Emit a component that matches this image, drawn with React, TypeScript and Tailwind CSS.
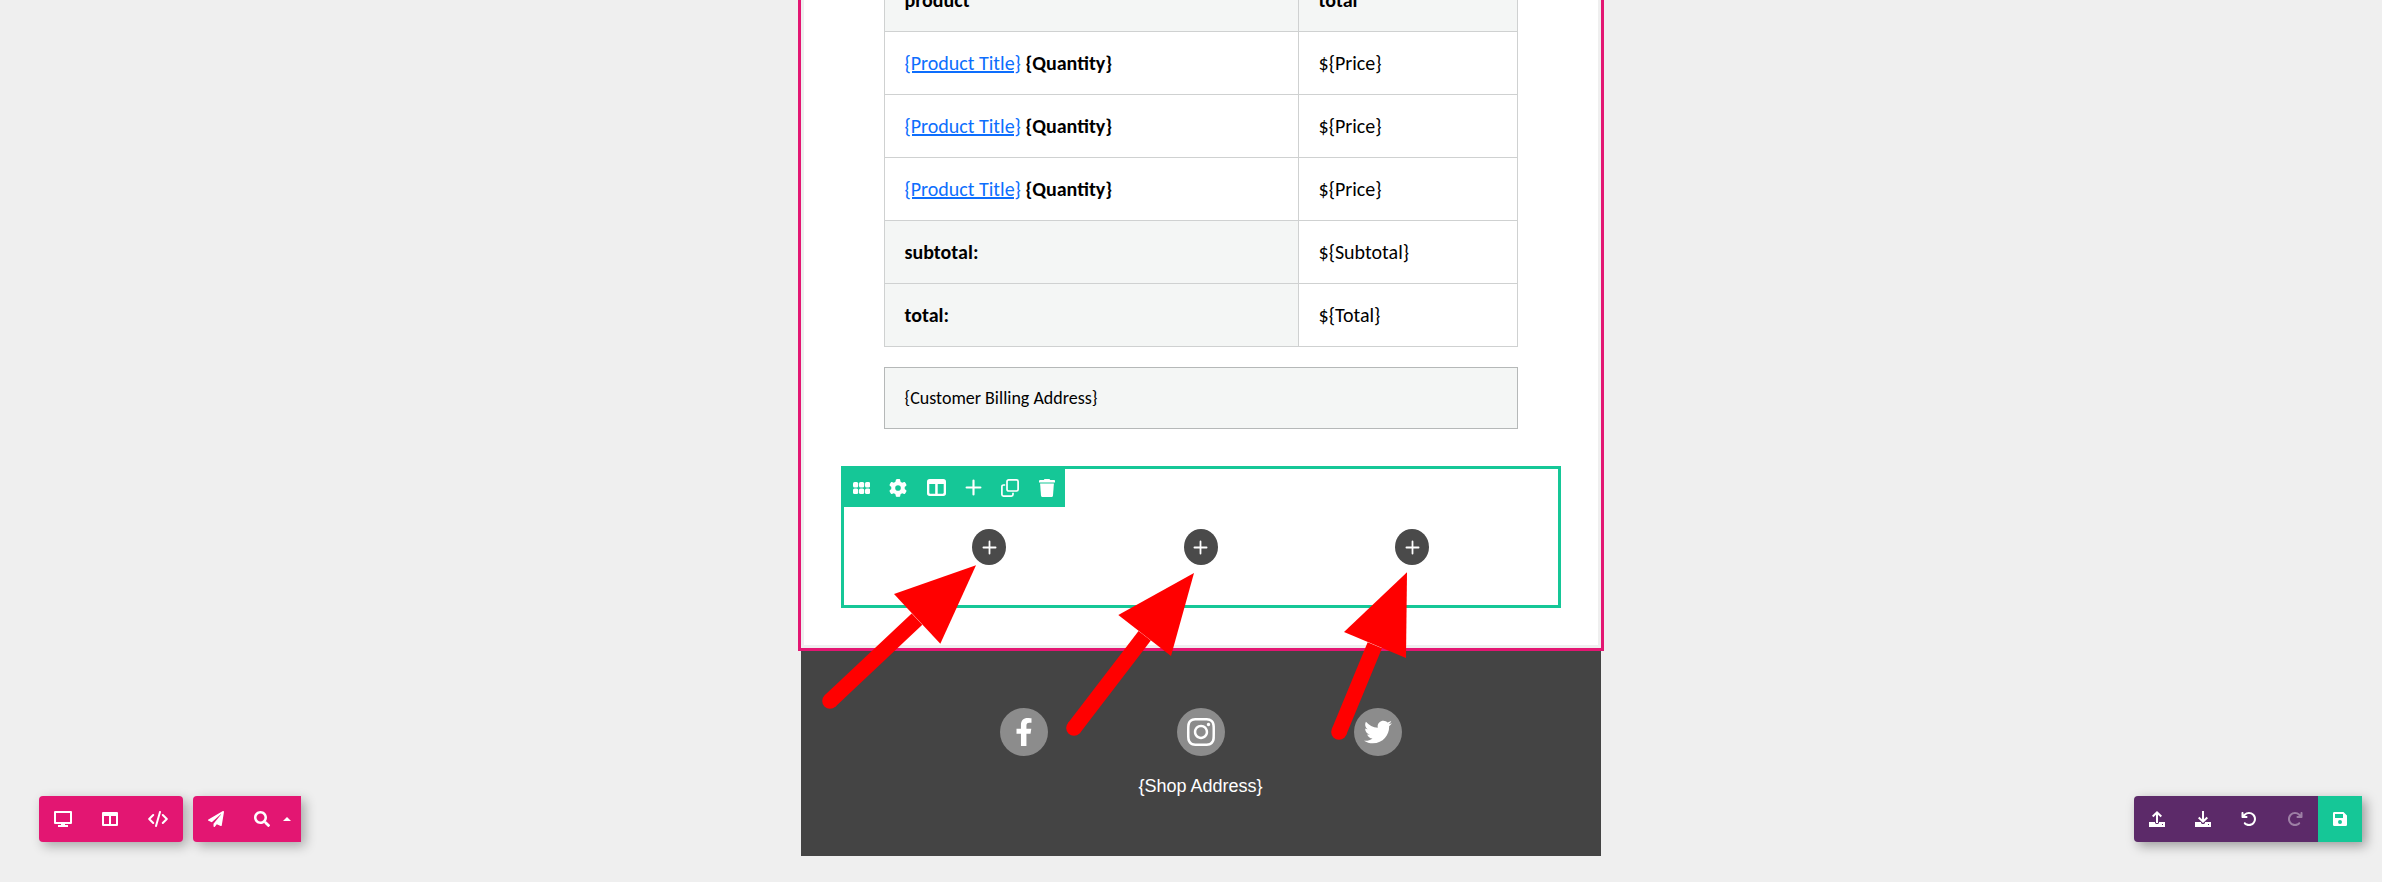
import type { ReactNode } from 'react';
import { FaPaperPlane, FaSearch, FaFacebookF, FaTwitter } from 'react-icons/fa';
import { FaArrowRotateLeft, FaArrowRotateRight, FaGear, FaInstagram } from 'react-icons/fa6';

function GripIcon() {
  return (
    <svg width="17" height="12" viewBox="0 0 17 12" fill="currentColor">
      {[0, 6, 12].map((x) =>
        [0, 6.5].map((y) => <rect key={`${x}-${y}`} x={x} y={y} width="5.2" height="5.5" rx="1.6" />),
      )}
    </svg>
  );
}

function ColumnsRoundIcon() {
  return (
    <svg width="19" height="17" viewBox="0 0 19 17" fill="currentColor">
      <path
        fillRule="evenodd"
        d="M2.7 0h13.6A2.7 2.7 0 0 1 19 2.7v11.6A2.7 2.7 0 0 1 16.3 17H2.7A2.7 2.7 0 0 1 0 14.3V2.7A2.7 2.7 0 0 1 2.7 0ZM2.3 5v8.8c0 .5.4.9.9.9h5V5ZM10.7 5v9.700h5.1c.5 0 .9-.4.9-.9V5Z"
      />
    </svg>
  );
}

function PlusIcon({ size, stroke }: { size: number; stroke: number }) {
  return (
    <svg width={size} height={size} viewBox="0 0 16 16" fill="none" stroke="currentColor" strokeWidth={stroke} strokeLinecap="round">
      <path d="M8 1.5v13M1.5 8h13" />
    </svg>
  );
}

function CloneIcon() {
  return (
    <svg width="18" height="18" viewBox="0 0 18 18" fill="none" stroke="currentColor" strokeWidth="1.7">
      <rect x="6" y="0.9" width="11.1" height="11.1" rx="1.6" />
      <path d="M4.2 6H2.5A1.6 1.6 0 0 0 .9 7.6v7.9a1.6 1.6 0 0 0 1.6 1.6h7.9a1.6 1.6 0 0 0 1.6-1.6v-1.7" />
    </svg>
  );
}

function TrashIcon() {
  return (
    <svg width="16" height="18" viewBox="0 0 16 18" fill="currentColor">
      <path d="M5.5 0h5l.7 1H15c.6 0 1 .4 1 .9V3.600H0V1.9C0 1.400.4 1 1 1h3.800Z" />
      <path d="M1.1 4.500h13.800l-.9 11.900c-.1.900-.8 1.600-1.700 1.600H3.700c-.9 0-1.600-.7-1.700-1.600Z" />
    </svg>
  );
}

function DesktopIcon() {
  return (
    <svg width="18" height="16" viewBox="0 0 18 16" fill="currentColor">
      <path fillRule="evenodd" d="M1 0h16a1 1 0 0 1 1 1v11a1 1 0 0 1-1 1h-6v1h3v2H4v-2h3v-1H1a1 1 0 0 1-1-1V1a1 1 0 0 1 1-1Zm1 2v9h14V2Z" />
    </svg>
  );
}

function ColumnsIcon() {
  return (
    <svg width="16" height="14" viewBox="0 0 16 14" fill="currentColor">
      <path fillRule="evenodd" d="M1 0h14a1 1 0 0 1 1 1v12a1 1 0 0 1-1 1H1a1 1 0 0 1-1-1V1a1 1 0 0 1 1-1Zm1 4v8h5V4Zm7 0v8h5V4Z" />
    </svg>
  );
}

function CodeIcon() {
  return (
    <svg width="20" height="16" viewBox="0 0 20 16" fill="none" stroke="currentColor" strokeWidth="2" strokeLinecap="round" strokeLinejoin="round">
      <path d="M5.200 4 1.200 8l4 4M14.800 4l4 4-4 4M12 1 8 15" />
    </svg>
  );
}

function TrayIcon({ down }: { down?: boolean }) {
  return (
    <svg width="16" height="16" viewBox="0 0 16 16" fill="currentColor">
      <path fillRule="evenodd" d="M0 11h6v1l1 1h2l1-1v-1h6v5H0Zm13 2v1h1v-1Z" />
      {down ? (
        <path d="M7 0h2v8.300l2.600-2.500 1.400 1.400-5 4.800-5-4.800 1.400-1.400L7 8.300Z" />
      ) : (
        <path d="M7 12V3.700L4.400 6.200 3 4.800 8 0l5 4.800-1.400 1.400L9 3.700V12Z" />
      )}
    </svg>
  );
}

function SaveIcon() {
  return (
    <svg width="14" height="14" viewBox="0 0 14 14" fill="currentColor">
      <path fillRule="evenodd" d="M1.300 0h9.200L14 3.500v9.200a1.300 1.300 0 0 1-1.300 1.300H1.300A1.300 1.300 0 0 1 0 12.700V1.300A1.300 1.300 0 0 1 1.300 0ZM2 2v4h8V2Zm5 6a2 2 0 1 0 0 4 2 2 0 0 0 0-4Z" />
    </svg>
  );
}

const rows: { label: ReactNode; value: string; head?: boolean; shaded?: boolean }[] = [
  { label: <b>product</b>, value: 'total', head: true, shaded: true },
  ...[0, 1, 2].map(() => ({
    label: (
      <span>
        <a className="text-[#0d6efd] underline">{'{Product Title}'}</a> <b>{'{Quantity}'}</b>
      </span>
    ),
    value: '${Price}',
  })),
  { label: <b>subtotal:</b>, value: '${Subtotal}', shaded: true },
  { label: <b>total:</b>, value: '${Total}', shaded: true },
];

function OrderTable() {
  return (
    <div className="ml-20 -mt-8 w-[634px] border-x border-t border-[#cfd1d1] text-[20px] leading-[30px] text-black">
      {rows.map((r, i) => (
        <div key={i} className="flex h-[63px] border-b border-[#cfd1d1]">
          <div className={`flex w-[414px] items-center border-r border-[#cfd1d1] pl-[19.5px] ${r.shaded ? 'bg-[#f4f6f5]' : ''}`}>
            {r.label}
          </div>
          <div className={`flex flex-1 items-center pl-[19.5px] ${r.head ? 'bg-[#f4f6f5] font-bold' : ''}`}>{r.value}</div>
        </div>
      ))}
    </div>
  );
}

function Slot({ width, children }: { width: string; children: ReactNode }) {
  return <span className={`flex h-full items-center justify-center ${width}`}>{children}</span>;
}

function ColumnsBlock() {
  return (
    <div className="mt-[37px] ml-[37px] h-[142px] w-[720px] border-[3px] border-[#15c797]">
      <div className="flex h-[38px] w-[221px] bg-[#15c797] pb-[1px] text-white">
        <Slot width="w-[35px]"><GripIcon /></Slot>
        <Slot width="w-[38px]"><FaGear size={18} /></Slot>
        <Slot width="w-[38px]"><ColumnsRoundIcon /></Slot>
        <Slot width="w-[36px]"><PlusIcon size={17} stroke={2} /></Slot>
        <Slot width="w-[38px]"><CloneIcon /></Slot>
        <Slot width="w-[36px]"><TrashIcon /></Slot>
      </div>
      <div className="mt-[22px] flex gap-[177.5px] pl-32">
        {[0, 1, 2].map((i) => (
          <span key={i} className="flex h-9 w-[34px] items-center justify-center rounded-[50%] bg-[#4a4a4a] text-white">
            <PlusIcon size={15} stroke={1.9} />
          </span>
        ))}
      </div>
    </div>
  );
}

function Footer() {
  return (
    <div className="ml-[3px] h-[205px] w-[800px] bg-[#444] pt-[57px] text-white">
      <div className="flex justify-center gap-[129px]">
        <span className="flex size-12 items-center justify-center rounded-full bg-[#8c8c8c]"><FaFacebookF size={28} /></span>
        <span className="flex size-12 items-center justify-center rounded-full bg-[#8c8c8c]"><FaInstagram size={32} /></span>
        <span className="flex size-12 items-center justify-center rounded-full bg-[#8c8c8c]"><FaTwitter size={28} /></span>
      </div>
      <p className="mt-[17px] pr-px text-center font-['Liberation_Sans',Arial,sans-serif] text-[18px] leading-[27px]">{'{Shop Address}'}</p>
    </div>
  );
}

function Arrows() {
  return (
    <svg className="absolute top-0 left-0" width="2382" height="882" viewBox="0 0 2382 882" fill="#f00">
      <g stroke="#f00" strokeWidth="15.5">
        <path d="M830 701 917 619.2" />
        <path d="M1074 728 1144.7 635.8" />
        <path d="M1339 732 1374.8 645.2" />
      </g>
      <circle cx="830" cy="701" r="7.8" />
      <circle cx="1074" cy="728" r="7.8" />
      <circle cx="1339" cy="732" r="7.8" />
      <path d="M976 565.3 894 594l46.300 49.700Z" />
      <path d="M1194 573 1118.300 615l52.700 41Z" />
      <path d="M1407 572.300 1344 632l62 26Z" />
    </svg>
  );
}

export default function App() {
  return (
    <div className="relative h-[882px] w-[2382px] overflow-hidden bg-[#efefef] font-['Carlito','Calibri','Lato',sans-serif]">
      <main className="ml-[798px] w-[806px]">
        <section className="h-[651px] overflow-hidden border-x-[3px] border-b-[3px] border-[#e31672] px-[3px] pb-[3px]">
          <div className="flow-root h-[645px] bg-white">
            <OrderTable />
            <div className="mt-5 ml-20 flex h-[62px] w-[634px] items-center border border-[#b5b8b8] bg-[#f4f6f5] pt-px pl-[19.5px] text-[18px] leading-[27px] text-black">
              {'{Customer Billing Address}'}
            </div>
            <ColumnsBlock />
          </div>
        </section>
        <Footer />
      </main>
      <Arrows />
      <div className="absolute top-[796px] left-[39px] flex gap-[10px] text-white">
        <div className="flex h-[46px] w-36 rounded-[4px] bg-[#e31672] shadow-[4px_4px_12px_rgba(0,0,0,0.3)]">
          <Slot width="w-[48px]"><DesktopIcon /></Slot>
          <Slot width="w-[46px]"><ColumnsIcon /></Slot>
          <Slot width="w-[50px]"><CodeIcon /></Slot>
        </div>
        <div className="flex h-[46px] w-[108px] rounded-l-[4px] bg-[#e31672] shadow-[4px_4px_12px_rgba(0,0,0,0.3)]">
          <Slot width="w-[46px]"><FaPaperPlane size={16} /></Slot>
          <Slot width="w-[46px]"><FaSearch size={16} /></Slot>
          <span className="-ml-[2px] flex items-center">
            <svg width="8" height="4" viewBox="0 0 8 4" fill="currentColor"><path d="M4 0l4 4H0Z" /></svg>
          </span>
        </div>
      </div>
      <div className="absolute top-[796px] left-[2134px] flex h-[46px] w-[228px] rounded-l-[4px] bg-[#5c2a69] text-white shadow-[4px_4px_12px_rgba(0,0,0,0.35)]">
        <Slot width="w-[46px]"><TrayIcon /></Slot>
        <Slot width="w-[46px]"><TrayIcon down /></Slot>
        <Slot width="w-[46px]"><FaArrowRotateLeft size={16} /></Slot>
        <Slot width="w-[46px] opacity-40"><FaArrowRotateRight size={16} /></Slot>
        <Slot width="w-[44px] bg-[#15c797]"><SaveIcon /></Slot>
      </div>
    </div>
  );
}
